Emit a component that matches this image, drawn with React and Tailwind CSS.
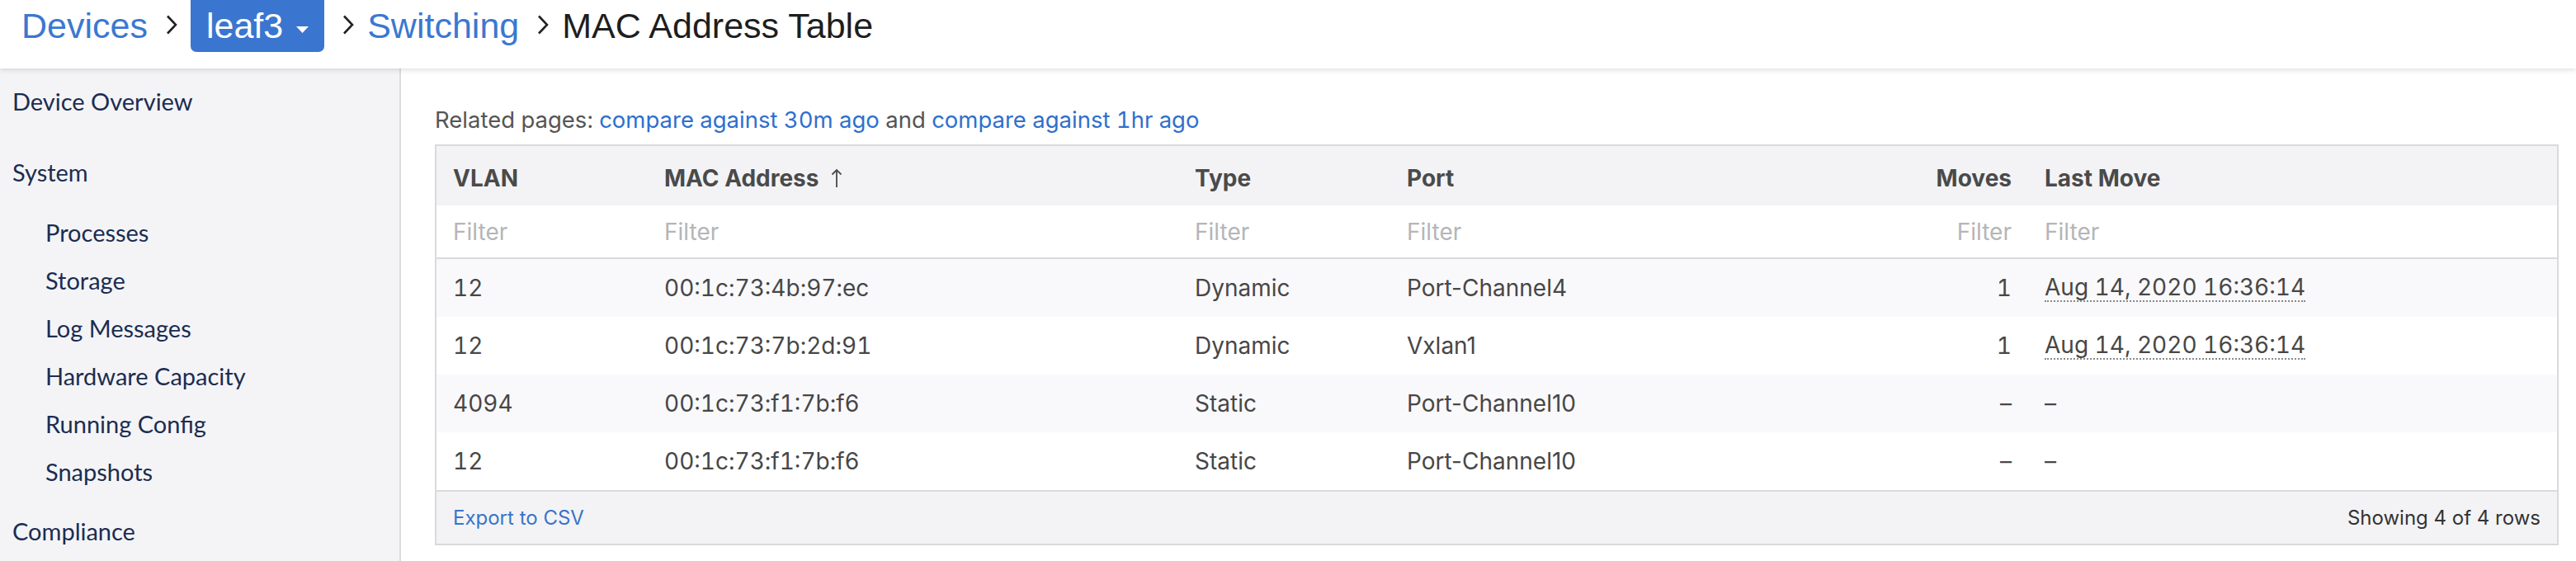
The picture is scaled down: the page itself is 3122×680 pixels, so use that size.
import React from 'react';

const rows = [
  { vlan: '12', mac: '00:1c:73:4b:97:ec', type: 'Dynamic', port: 'Port-Channel4', moves: '1', last: 'Aug 14, 2020 16:36:14' },
  { vlan: '12', mac: '00:1c:73:7b:2d:91', type: 'Dynamic', port: 'Vxlan1', moves: '1', last: 'Aug 14, 2020 16:36:14' },
  { vlan: '4094', mac: '00:1c:73:f1:7b:f6', type: 'Static', port: 'Port-Channel10', moves: null, last: null },
  { vlan: '12', mac: '00:1c:73:f1:7b:f6', type: 'Static', port: 'Port-Channel10', moves: null, last: null },
];

const grid = 'grid grid-cols-[256px_643px_257px_643px_130px_1fr]';

function Chevron() {
  return (
    <svg className="ml-[22px] mr-[16px] mt-[18px] h-[24px] w-[14px] shrink-0" viewBox="0 0 14 24" fill="none">
      <polyline points="2,1.5 12,12 2,22.5" stroke="#222" strokeWidth="2.6" strokeLinejoin="miter" />
    </svg>
  );
}

function SideLink({ children, sub }) {
  return sub ? (
    <div className="h-[58px] leading-[58px] pl-[55px]">{children}</div>
  ) : (
    <div className="h-[51px] leading-[51px] pl-[15px]">{children}</div>
  );
}

export default function App() {
  return (
    <div className="w-[3122px] h-[680px] bg-white flex flex-col overflow-hidden font-['Inter',sans-serif]">
      <header className="relative z-10 h-[83px] shrink-0 bg-white shadow-[0_2px_6px_rgba(0,0,0,0.13)] flex items-start pl-[26px] font-['Liberation_Sans',Arial,sans-serif] text-[43px] leading-[42px]">
        <a className="pt-[10px] text-[#3b78d1]">Devices</a>
        <Chevron />
        <button className="h-[63px] rounded-b-[7px] bg-[#3a76cf] text-white pl-[19px] pr-[19px] flex items-start">
          <span className="pt-[10px]">leaf3</span>
          <svg className="ml-[16px] mt-[32px] w-[15px] h-[8px]" viewBox="0 0 15 8">
            <polygon points="0,0 15,0 7.5,8" fill="white" />
          </svg>
        </button>
        <Chevron />
        <a className="pt-[10px] text-[#3b78d1]">Switching</a>
        <Chevron />
        <span className="pt-[10px] text-[#1e1e1e]">MAC Address Table</span>
      </header>

      <div className="flex flex-1 min-h-0">
        <aside className="w-[486px] shrink-0 bg-[#f4f4f7] border-r-2 border-[#dcdcdf] pt-[14px] text-[29px] text-[#1b2d50] font-['Lato',sans-serif]">
          <SideLink>Device Overview</SideLink>
          <div className="mt-[35px]">
            <SideLink>System</SideLink>
          </div>
          <div className="mt-[19px]">
            <SideLink sub>Processes</SideLink>
            <SideLink sub>Storage</SideLink>
            <SideLink sub>Log Messages</SideLink>
            <SideLink sub>Hardware Capacity</SideLink>
            <SideLink sub>Running Config</SideLink>
            <SideLink sub>Snapshots</SideLink>
          </div>
          <div className="mt-[17px]">
            <SideLink>Compliance</SideLink>
          </div>
        </aside>

        <main className="flex-1 pl-[41px] pr-[21px] pt-[45px] text-[28px] leading-[34px]">
          <p className="text-[#555] text-[27.5px] tabular-nums">
            Related pages: <a className="text-[#2f6fcd]">compare against 30m ago</a> and{' '}
            <a className="text-[#2f6fcd]">compare against 1hr ago</a>
          </p>

          <div className="mt-[13px] border-2 border-[#dadadc]">
            <div className={`${grid} h-[72px] bg-[#f3f3f6] font-bold text-[#4a4a4a] pt-[6px]`}>
              <div className="px-[20px] flex items-center">VLAN</div>
              <div className="px-[20px] flex items-center">
                MAC Address
                <svg className="ml-[15px] w-[14px] h-[24px]" viewBox="0 0 14 24" fill="none">
                  <path d="M7 23V2M1.5 7.5L7 2l5.5 5.5" stroke="#4a4a4a" strokeWidth="1.8" />
                </svg>
              </div>
              <div className="px-[20px] flex items-center">Type</div>
              <div className="px-[20px] flex items-center">Port</div>
              <div className="px-[20px] flex items-center justify-end">Moves</div>
              <div className="px-[20px] flex items-center">Last Move</div>
            </div>

            <div className={`${grid} h-[65px] bg-white border-b-2 border-[#dadadc] text-[#b5b5b8]`}>
              {['', '', '', '', 'right', ''].map((a, i) => (
                <div key={i} className={`px-[20px] flex items-center ${a ? 'justify-end' : ''}`}>Filter</div>
              ))}
            </div>

            {rows.map((r, i) => (
              <div key={i} className={`${grid} h-[70px] text-[#474747] ${i % 2 === 0 ? 'bg-[#f9f9fb]' : 'bg-white'}`}>
                <div className="px-[20px] flex items-center tabular-nums">{r.vlan}</div>
                <div className="px-[20px] flex items-center tabular-nums">{r.mac}</div>
                <div className="px-[20px] flex items-center">{r.type}</div>
                <div className="px-[20px] flex items-center">{r.port}</div>
                <div className="px-[20px] flex items-center justify-end tabular-nums">{r.moves ?? '–'}</div>
                <div className="px-[20px] flex items-center tabular-nums">
                  {r.last ? (
                    <span className="inline-block border-b-2 border-dotted border-[#8a8a8a] leading-[32px]">{r.last}</span>
                  ) : (
                    '–'
                  )}
                </div>
              </div>
            ))}

            <div className="h-[65px] border-t-2 border-[#dadadc] bg-[#f3f3f6] flex items-center justify-between px-[20px] text-[24px] leading-[29px]">
              <a className="text-[#3a74c9]">Export to CSV</a>
              <span className="text-[#333]">Showing 4 of 4 rows</span>
            </div>
          </div>
        </main>
      </div>
    </div>
  );
}
